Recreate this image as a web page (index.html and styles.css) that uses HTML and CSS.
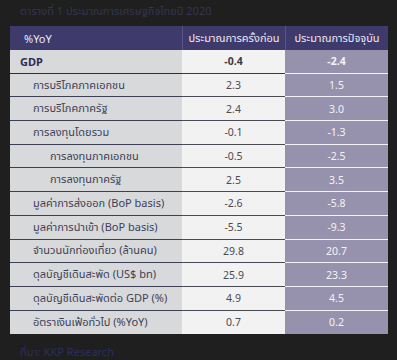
FILE: index.html
```html
<!DOCTYPE html>
<html lang="th">
<head>
<meta charset="utf-8">
<link rel="stylesheet" href="styles.css">
</head>
<body>
<div class="page">
  <div class="title">ตารางที่ 1 ประมาณการเศรษฐกิจไทยปี 2020</div>
  <div class="table">
    <div class="row head">
      <div class="c1">%YoY</div>
      <div class="c2">ประมาณการครั้งก่อน</div>
      <div class="c3">ประมาณการปัจจุบัน</div>
    </div>
    <div class="row bold">
      <div class="c1 l0">GDP</div><div class="c2">-0.4</div><div class="c3">-2.4</div>
    </div>
    <div class="row"><div class="c1 l1">การบริโภคภาคเอกชน</div><div class="c2">2.3</div><div class="c3">1.5</div></div>
    <div class="row"><div class="c1 l1">การบริโภคภาครัฐ</div><div class="c2">2.4</div><div class="c3">3.0</div></div>
    <div class="row"><div class="c1 l1">การลงทุนโดยรวม</div><div class="c2">-0.1</div><div class="c3">-1.3</div></div>
    <div class="row"><div class="c1 l2">การลงทุนภาคเอกชน</div><div class="c2">-0.5</div><div class="c3">-2.5</div></div>
    <div class="row"><div class="c1 l2">การลงทุนภาครัฐ</div><div class="c2">2.5</div><div class="c3">3.5</div></div>
    <div class="row"><div class="c1 l1">มูลค่าการส่งออก (BoP basis)</div><div class="c2">-2.6</div><div class="c3">-5.8</div></div>
    <div class="row"><div class="c1 l1">มูลค่าการนำเข้า (BoP basis)</div><div class="c2">-5.5</div><div class="c3">-9.3</div></div>
    <div class="row"><div class="c1 l1">จำนวนนักท่องเที่ยว (ล้านคน)</div><div class="c2">29.8</div><div class="c3">20.7</div></div>
    <div class="row"><div class="c1 l1">ดุลบัญชีเดินสะพัด (US$ bn)</div><div class="c2">25.9</div><div class="c3">23.3</div></div>
    <div class="row"><div class="c1 l1">ดุลบัญชีเดินสะพัดต่อ GDP (%)</div><div class="c2">4.9</div><div class="c3">4.5</div></div>
    <div class="row last"><div class="c1 l1">อัตราเงินเฟ้อทั่วไป (%YoY)</div><div class="c2">0.7</div><div class="c3">0.2</div></div>
  </div>
  <div class="source">ที่มา: KKP Research</div>
</div>
</body>
</html>
```
FILE: styles.css
```css
html, body {
  margin: 0;
  padding: 0;
  background: #1f1f1f;
}
body {
  font-family: "Noto Sans", "Noto Sans Thai", "Open Sans", sans-serif;
  font-size: 11px;
  width: 397px;
  height: 360px;
  overflow: hidden;
}
.page {
  padding: 2px 9px 0 10px;
}
.title {
  height: 24px;
  line-height: 18px;
  padding-left: 10px;
  color: #34364f;
  font-size: 11px;
  white-space: nowrap;
}
.table {
  display: flex;
  flex-direction: column;
  width: 378px;
}
.row {
  display: grid;
  grid-template-columns: 172px 103px 103px;
  height: 23.7px;
}
.row > div {
  display: flex;
  align-items: center;
  white-space: nowrap;
  border-bottom: 1px solid;
  box-sizing: border-box;
}
.c1 {
  background: #d8d9db;
  color: #3d3f57;
  border-color: #c6c7ca;
}
.c2 {
  background: #f2f2f3;
  color: #4a4a52;
  justify-content: center;
  border-color: #dcdcde;
  font-size: 10.5px;
}
.c3 {
  background: #9692ad;
  color: #f4f3f8;
  justify-content: center;
  border-color: #8a86a1;
  font-size: 10.5px;
}
.row.last > div { border-bottom: none; }
.head {
  height: 24px;
}
.head > div {
  background: #3f3a6c;
  color: #eceaf5;
  border-bottom: none;
  font-size: 11px;
}
.head .c1 {
  padding-left: 14px;
  justify-content: flex-start;
}
.head .c2, .head .c3 {
  border-left: 1px solid #56528a;
}
.bold > div { font-weight: bold; }
.bold .c1 { color: #2d2a55; }
.bold .c2 { color: #3a3a42; }
.l0 { padding-left: 10px; }
.l1 { padding-left: 23px; }
.l2 { padding-left: 40px; }
.source {
  padding: 10px 0 0 10px;
  color: #2c2f5c;
  font-size: 11px;
}
```
